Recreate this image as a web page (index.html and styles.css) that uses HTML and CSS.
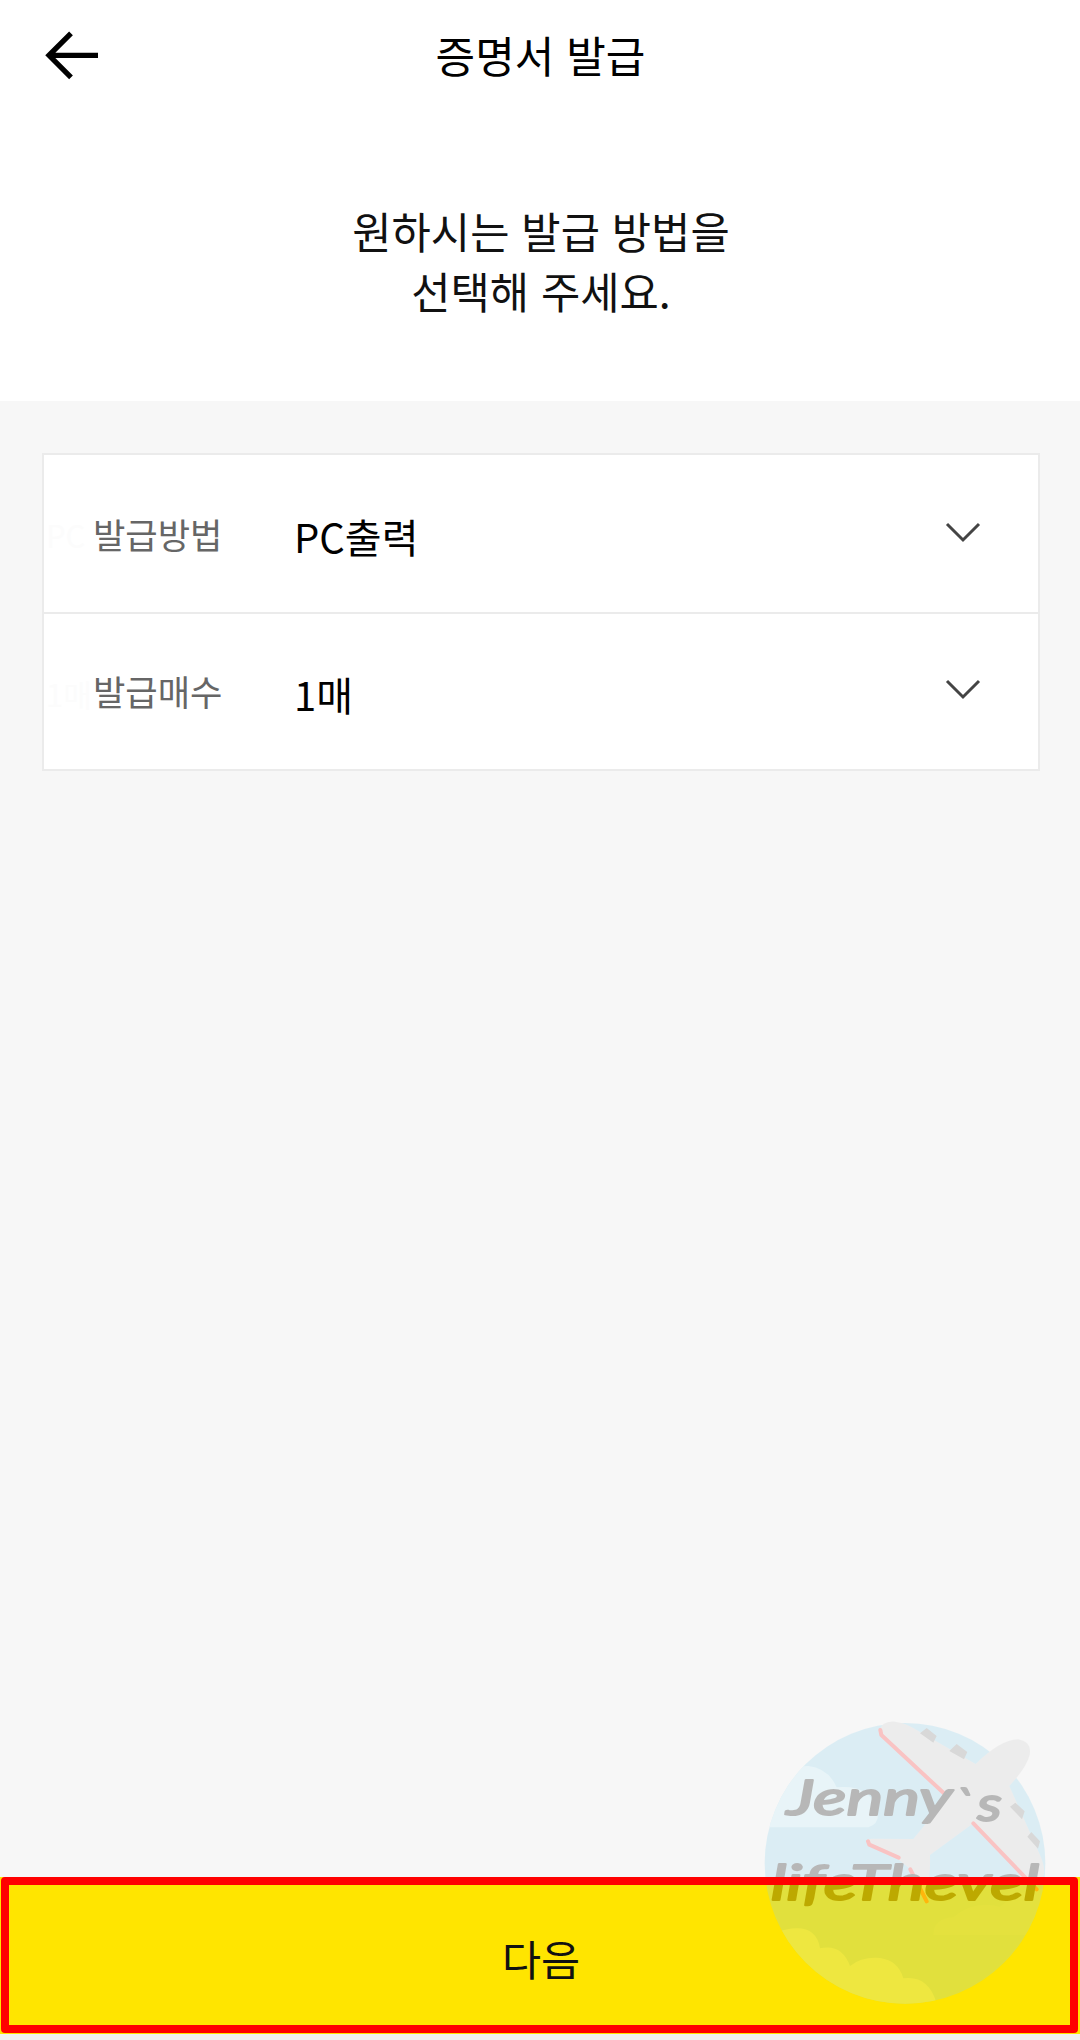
FILE: index.html
```
<!DOCTYPE html>
<html lang="ko">

<head>
    <meta charset="UTF-8">
    <title>증명서 발급</title>
    <link rel="stylesheet" href="styles.css">
</head>

<body>
    <header class="header">
        <button class="back-btn" aria-label="뒤로">
            <svg width="54" height="50" viewBox="0 0 54 50" fill="none" stroke="#000" stroke-width="5.3">
                <path d="M27 3.3 5 25.3 27 47.3M6 25.3H54" />
            </svg>
        </button>
        <h1>증명서 발급</h1>
    </header>
    <h2 class="guide">원하시는 발급 방법을<br>선택해 주세요.</h2>
    <main class="content">
        <div class="option-list">
            <div class="option">
                <span class="option-ghost">PC</span>
                <span class="option-label">발급방법</span>
                <span class="option-value">PC출력</span>
                <svg class="chevron" width="36" height="22" viewBox="0 0 36 22">
                    <path d="M2 3 18 19 34 3" />
                </svg>
            </div>
            <div class="option">
                <span class="option-ghost">1매</span>
                <span class="option-label">발급매수</span>
                <span class="option-value">1매</span>
                <svg class="chevron" width="36" height="22" viewBox="0 0 36 22">
                    <path d="M2 3 18 19 34 3" />
                </svg>
            </div>
        </div>
    </main>
    <footer class="footer">
        <button class="next-btn">다음</button>
        <svg class="watermark" viewBox="0 0 1020 1020">
            <clipPath id="badge">
                <circle cx="495" cy="490" r="421" />
            </clipPath>
            <g opacity=".255">
                <circle cx="495" cy="490" r="421" fill="#8dd4ef" />
                <!-- clouds -->
                <g clip-path="url(#badge)" fill="#c0effb">
                    <path d="M60 382V260Q130 198 205 198Q265 205 290 262Q380 252 410 320Q425 370 385 382Z" />
                    <path d="M100 700Q225 655 240 745Q305 730 330 798Q365 770 420 774Q475 782 490 835Q565 825 590 910L300 960Z" />
                    <path d="M580 705Q580 655 640 652Q700 600 780 620Q860 550 950 570V705Z" opacity=".22" />
                </g>
                <!-- plane -->
                <path fill="#d0d0d0" d="M418 95Q424 62 465 65Q495 68 530 90L707 192Q780 120 834 118Q876 125 869 165Q860 202 808 258L900 465Q920 510 908 535Q895 568 868 546L700 370L570 465Q572 535 558 590Q540 600 508 505L470 475L384 434Q376 415 398 416L520 417L573 352L612 282Z" />
                <!-- engines -->
                <g fill="#808080">
                    <path d="M540 100 560 84 590 108 580 128Z" />
                    <path d="M628 153 650 132 682 156 672 178Z" />
                    <path d="M810 320 826 308 854 334 846 358Z" />
                    <path d="M862 410 874 396 900 424 894 446Z" />
                </g>
                <g fill="none" stroke="#ff3030" stroke-width="12" stroke-linecap="round" stroke-linejoin="round">
                    <path d="M421 90 424 105 615 283M700 370 890 568M384 424 388 434 476 473M511 508 560 604" />
                </g>
                <g class="watermark-text">
                    <text x="140" y="345" textLength="497" lengthAdjust="spacingAndGlyphs">Jenny</text>
                    <text x="643" y="368">`</text>
                    <text x="712" y="362" textLength="74" lengthAdjust="spacingAndGlyphs">s</text>
                    <text x="92" y="600" textLength="806" lengthAdjust="spacingAndGlyphs">lifeThevel</text>
                </g>
            </g>
        </svg>
        <div class="highlight"></div>
    </footer>
</body>

</html>
```
FILE: styles.css
```
* {
    box-sizing: border-box;
}

body {
    display: flex;
    flex-direction: column;
    margin: 0;
    height: 2040px;
    background-color: #fff;
    color: #000;
    font-family: "Noto Sans CJK KR", sans-serif;
}

button {
    border: 0;
    padding: 0;
    background: none;
    font: inherit;
    cursor: pointer;
}

h1,
h2 {
    margin: 0;
    font-weight: 400;
}

.header {
    display: grid;
    grid-template-columns: 54px 1fr 54px;
    align-items: center;
    height: 110px;
    padding: 0 43px 0 44px;
}

.back-btn {
    display: flex;
}

.header h1 {
    padding-bottom: 2px;
    font-size: 43px;
    line-height: 60px;
    text-align: center;
}

.guide {
    height: 291px;
    padding: 90px 0 0 2px;
    color: #111;
    font-size: 42.7px;
    line-height: 60px;
    text-align: center;
}

.content {
    flex: 1;
    padding: 52px 40px 0 42px;
    background-color: #f7f7f7;
}

.option-list {
    border: 2px solid #ebebeb;
    background-color: #fff;
}

.option {
    position: relative;
    display: flex;
    align-items: center;
    height: 157px;
    padding: 0 57px 0 49px;
}

.option + .option {
    border-top: 2px solid #ebebeb;
    padding-bottom: 2px;
}

.option-ghost {
    position: absolute;
    left: 2px;
    top: 50px;
    color: #fcfcfc;
    font-size: 31px;
    line-height: 60px;
}

.option-label {
    width: 201px;
    color: #666;
    font-size: 35.2px;
}

.option-value {
    flex: 1;
    padding-top: 4px;
    font-size: 40px;
}

.option + .option .option-value {
    padding-top: 6px;
}

.chevron {
    margin-bottom: 4px;
    fill: none;
    stroke: #444;
    stroke-width: 3;
}

.footer {
    position: relative;
    height: 163px;
    padding-bottom: 6px;
    background-color: #f2f2f2;
}

.next-btn {
    display: block;
    width: 100%;
    height: 157px;
    padding: 3px 0 0 2px;
    background-color: #ffe500;
    color: #111;
    font-size: 42.5px;
}

.watermark {
    position: absolute;
    right: 0;
    bottom: 0;
    width: 340px;
    height: 340px;
}

.watermark-text {
    font-family: Lato, sans-serif;
    font-size: 148px;
    font-style: italic;
    font-weight: 400;
    stroke: #000;
    stroke-width: 6;
    stroke-linejoin: round;
}

/* red frame around the button */
.highlight {
    position: absolute;
    inset: 0 2px 7px 1px;
    border: 8px solid #f00;
    border-radius: 4px;
}
```
